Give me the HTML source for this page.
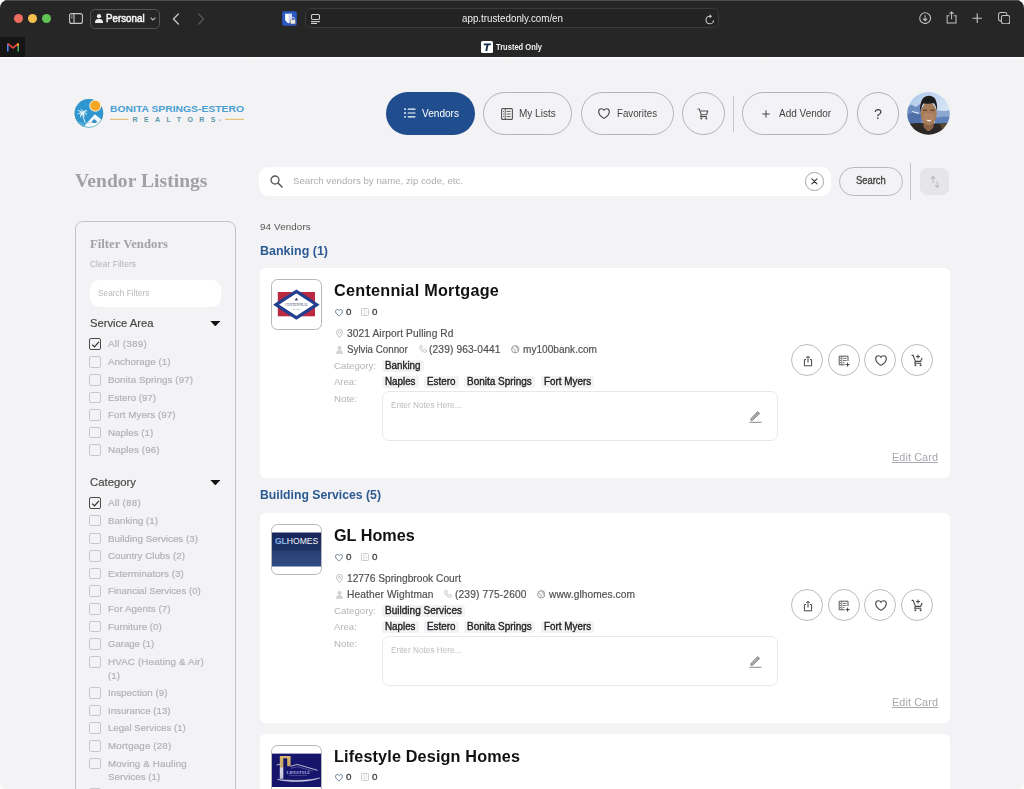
<!DOCTYPE html>
<html lang="en"><head><meta charset="utf-8"><title>Trusted Only</title><style>
*{box-sizing:border-box;margin:0;padding:0}
html,body{width:1024px;height:789px;overflow:hidden;background:#fff}
body{font-family:"Liberation Sans",sans-serif;position:relative;color:#222}
.abs,.t,svg.i{position:absolute}
.t{white-space:nowrap;transform:scaleX(.9999);transform-origin:0 50%}
#win{position:absolute;left:0;top:0;width:1024px;height:789px;background:#f3f3f6;border-radius:8px 8px 6px 6px;overflow:hidden}
#chrome{position:absolute;left:0;top:0;width:1024px;height:57px;background:#262626}
.pill{position:absolute;border:1px solid #b4b4b8;border-radius:22px;background:transparent}
.card{position:absolute;left:260px;width:689.6px;height:209.6px;background:#fff;border-radius:5.5px}
.lb{position:absolute;left:11px;top:11px;width:51px;height:51px;border:1.2px solid #b6b6ba;border-radius:6.5px;background:#fff;overflow:hidden}
.chip{position:absolute;height:12px;background:#f2f2f5;border-radius:3px}
.note{position:absolute;left:121.5px;top:123.2px;width:396px;height:49.5px;border:1px solid #e8e8eb;border-radius:7px;background:#fff}
.circ{position:absolute;width:32px;height:32px;border:1.2px solid #bcbcc0;border-radius:50%}
.cb{position:absolute;left:89px;width:11.6px;height:11.6px;border:1.2px solid #c8c8cc;border-radius:2px}
.cb.on{border-color:#4a4a4a;border-width:1.4px}
</style></head><body><div id="win"><div id="chrome"><div class="abs" style="left:0;top:0;width:1024px;height:1px;background:#4e4e4e"></div><div class="abs" style="left:13.600000000000001px;top:13.7px;width:9.4px;height:9.4px;border-radius:50%;background:#ec6a5e"></div><div class="abs" style="left:27.599999999999998px;top:13.7px;width:9.4px;height:9.4px;border-radius:50%;background:#f4bf4f"></div><div class="abs" style="left:41.699999999999996px;top:13.7px;width:9.4px;height:9.4px;border-radius:50%;background:#61c554"></div><svg class="i" style="left:69px;top:13px" width="14" height="11" viewBox="0 0 14 11"><rect x=".6" y=".6" width="12.8" height="9.8" rx="2" fill="none" stroke="#c8c8c8" stroke-width="1.1"></rect><line x1="5" y1=".6" x2="5" y2="10.4" stroke="#c8c8c8" stroke-width="1.1"></line><line x1="2" y1="3" x2="3.6" y2="3" stroke="#c8c8c8" stroke-width=".8"></line><line x1="2" y1="4.8" x2="3.6" y2="4.8" stroke="#c8c8c8" stroke-width=".8"></line></svg><div class="abs" style="left:89.5px;top:8.5px;width:70px;height:20px;border:1px solid #555;border-radius:5px"></div><svg class="i" style="left:95px;top:13.5px" width="8" height="9" viewBox="0 0 8 9"><circle cx="4" cy="2.2" r="2.1" fill="#eee"></circle><path d="M0 9 C0 5.6 1.6 5 4 5 S8 5.6 8 9Z" fill="#eee"></path></svg><div class="t" style="left: 106.3px; top: 11.9px; font-size: 10.3px; line-height: 14px; color: rgb(242, 242, 242); -webkit-text-stroke: 0.55px; transform-origin: 0px 50%; transform: scaleX(0.9499);">Personal</div><svg class="i" style="left:150px;top:16.5px" width="6" height="4" viewBox="0 0 6 4"><path d="M.6 .6 L3 3 L5.4 .6" fill="none" stroke="#bbb" stroke-width="1.1"></path></svg><svg class="i" style="left:172px;top:12.5px" width="8" height="12" viewBox="0 0 8 12"><path d="M6.4 1 L1.4 6 L6.4 11" fill="none" stroke="#c4c4c4" stroke-width="1.4" stroke-linecap="round" stroke-linejoin="round"></path></svg><svg class="i" style="left:197px;top:12.5px" width="8" height="12" viewBox="0 0 8 12"><path d="M1.6 1 L6.6 6 L1.6 11" fill="none" stroke="#555" stroke-width="1.4" stroke-linecap="round" stroke-linejoin="round"></path></svg><svg class="i" style="left:281.500px;top:10.500px" width="15" height="15" viewBox="-.2 -.2 15.400 15.400"><rect width="15" height="15" rx="2" fill="#2c57c4"></rect><path d="M3 2.5 H10 V8 C10 10.5 6.5 12.5 6.5 12.5 S3 10.5 3 8Z" fill="#fff"></path><path d="M6.5 2.5 H10 V8 C10 10.5 6.5 12.5 6.5 12.5Z" fill="#cfd9f2"></path><rect x="8.3" y="8.6" width="5.4" height="4.6" rx="1" fill="#e8e8e8" stroke="#444" stroke-width=".5"></rect><path d="M9.6 8.6 V7.6 A1.4 1.4 0 0 1 12.4 7.6 V8.6" fill="none" stroke="#e8e8e8" stroke-width=".9"></path></svg><div class="abs" style="left:304.6px;top:8.4px;width:414px;height:20px;border:1.2px solid #3a3a3a;border-radius:6px;background:#232323"></div><svg class="i" style="left:310.500px;top:13.500px" width="9" height="10" viewBox="0 0 9 10"><rect x=".55" y=".55" width="7.900" height="5" rx="1.100" fill="none" stroke="#d0d0d0" stroke-width="1.100"></rect><line x1="0" y1="7.600" x2="9" y2="7.600" stroke="#d0d0d0" stroke-width="1.100"></line><line x1="0" y1="9.450" x2="6" y2="9.450" stroke="#d0d0d0" stroke-width="1.100"></line></svg><div class="t" style="left: 462px; top: 11.5px; font-size: 10.3px; line-height: 14px; color: rgb(240, 240, 240); transform-origin: 0px 50%; transform: scaleX(0.9504);">app.trustedonly.com/en</div><svg class="i" style="left:705px;top:13.5px" width="10" height="11" viewBox="0 0 10 11"><path d="M8.6 6.2 A3.8 3.8 0 1 1 5 2.2" fill="none" stroke="#c8c8c8" stroke-width="1.1"></path><path d="M4.6 .2 L7.2 2.2 L4.6 4.2Z" fill="#c8c8c8"></path></svg><svg class="i" style="left:919.2px;top:11.8px" width="12.300" height="12.300" viewBox="0 0 13 13"><circle cx="6.5" cy="6.5" r="5.7" fill="none" stroke="#c4c4c4" stroke-width="1.1"></circle><path d="M6.5 3.4 V9 M4.3 7 L6.5 9.2 L8.7 7" fill="none" stroke="#c4c4c4" stroke-width="1.1"></path></svg><svg class="i" style="left:945.8px;top:11px" width="11.200" height="13" viewBox="0 0 12 14"><path d="M3.6 5 H1.2 V13 H10.8 V5 H8.4" fill="none" stroke="#c4c4c4" stroke-width="1.1"></path><path d="M6 9 V1.2 M3.8 3.2 L6 1 L8.2 3.2" fill="none" stroke="#c4c4c4" stroke-width="1.1"></path></svg><svg class="i" style="left:971.8px;top:12.700px" width="10.500" height="10.500" viewBox="0 0 11 11"><path d="M5.5 .5 V10.5 M.5 5.5 H10.5" stroke="#c4c4c4" stroke-width="1.2"></path></svg><svg class="i" style="left:997.7px;top:11.8px" width="12.300" height="12.300" viewBox="0 0 13 13"><rect x="3.6" y="3.6" width="8.8" height="8.8" rx="2" fill="#262626" stroke="#c4c4c4" stroke-width="1.1"></rect><path d="M3.4 9.4 H2.6 A2 2 0 0 1 .6 7.4 V2.6 A2 2 0 0 1 2.6 .6 H7.4 A2 2 0 0 1 9.4 2.6 V3.4" fill="none" stroke="#c4c4c4" stroke-width="1.1"></path></svg><div class="abs" style="left:0;top:36.5px;width:24.5px;height:20.5px;background:#151515"></div><svg class="i" style="left:6.8px;top:43px" width="12" height="8.5" viewBox="0 0 12 8.5"><path d="M0 8.5 V1 L1.6 0 V8.5Z" fill="#4a86e8"></path><path d="M12 8.5 V1 L10.4 0 V8.5Z" fill="#3aa757"></path><path d="M0 1 L1.2 0 L6 3.8 L10.8 0 L12 1 L6 6Z" fill="#e8453c"></path><path d="M10.4 0 L12 1 V2.4 L10.4 3.4Z" fill="#f5b916"></path></svg><svg class="i" style="left:481px;top:41px" width="12" height="12" viewBox="0 0 12 12"><rect width="12" height="12" rx="1.5" fill="#fff"></rect><path d="M3 2.6 H10 L9.6 4.3 H7.4 L6.2 10 H4.3 L5.5 4.3 H2.6Z" fill="#14284e"></path></svg><div class="t" style="left: 496px; top: 41px; font-size: 8.3px; line-height: 12px; color: rgb(240, 240, 240); font-weight: 700; transform-origin: 0px 50%; transform: scaleX(0.9071);">Trusted Only</div></div><div class="abs" style="left:0;top:57px;width:1024px;height:3px;background:linear-gradient(#fdfdfe,#f3f3f6)"></div><svg class="i" style="left:73px;top:97px" width="174" height="34" viewBox="0 0 174 34">
<defs><clipPath id="lc"><circle cx="15.900" cy="16.300" r="14.300"></circle></clipPath></defs>
<circle cx="15.900" cy="16.300" r="14.300" fill="#2f96cf"></circle>
<g clip-path="url(#lc)">
<path d="M21.800 17.300 L31 24.500 V32 H9 L12.500 27.500Z" fill="#f2f9fc"></path>
<path d="M0 24 C4 23 8 25 12 28 L10 32 H0Z" fill="#5db3dc"></path>
<path d="M18.300 24.600 L21.300 22 L24.300 24.600 H23.500 V26 H19.100 V24.600Z" fill="#3f8fc6"></path>
<path d="M15 24.500 l1 1 -1 1 M16.500 25 l1.200 1.5" stroke="#8f9cc8" stroke-width=".6" fill="none"></path>
<path d="M9.300 15.500 C9.800 19 10.800 22.500 12.300 26" stroke="#cfe6f4" stroke-width="1.100" fill="none"></path>
<path d="M9 15.600 C7.500 13.300 5.500 12.800 3.600 13.600 C5.500 13.800 6.800 14.500 7.800 15.600 C6 15.400 4.600 16.300 4 18 C5.300 17 6.600 16.600 8 16.600 C7 18 7 19.600 7.600 20.800 C8 19.300 8.600 18 9.500 17 C10.500 18 11 19.300 11 20.600 C12 19.200 11.800 17.600 10.800 16.400 C12.300 16.400 13.500 17 14.300 18 C14 16.300 12.600 15.200 10.800 15.200 C12 14.200 13.500 13.900 14.800 14.300 C13.300 12.800 11 13.200 9.800 14.800 C9.600 13.200 8.600 12 7.200 11.600 C8.200 12.600 8.800 14 9 15.600Z" fill="#e8f6fc"></path>
</g>
<circle cx="15.900" cy="16.300" r="14" fill="none" stroke="#3a8fa6" stroke-width=".7" opacity=".7"></circle>
<circle cx="22.300" cy="8.700" r="5.5" fill="#f5a623" stroke="#f7ead0" stroke-width="1.100"></circle>
<rect x="37" y="21.800" width="18.5" height="1.100" fill="#e3bd6b"></rect>
<rect x="152" y="21.800" width="19" height="1.100" fill="#e3bd6b"></rect>
<text x="37" y="15" font-family="Liberation Sans, sans-serif" font-weight="700" font-size="9.300" fill="#4a9fd2" textLength="134" lengthAdjust="spacingAndGlyphs">BONITA SPRINGS-ESTERO</text>
<text x="59.5" y="25.300" font-family="Liberation Sans, sans-serif" font-weight="700" font-size="7" fill="#5b97a8" textLength="83" lengthAdjust="spacing">REALTORS</text>
<text x="145.5" y="24.5" font-family="Liberation Sans, sans-serif" font-size="3.5" fill="#5b97a8">®</text>
</svg><div class="abs" style="left:385.5px;top:92px;width:89.7px;height:42.5px;border-radius:22px;background:#1f4d8e"></div><svg class="i" style="left:403.5px;top:108px" width="12" height="10" viewBox="0 0 12 10"><g fill="#fff"><circle cx="1" cy="1.2" r=".9"></circle><circle cx="1" cy="5" r=".9"></circle><circle cx="1" cy="8.800" r=".9"></circle><rect x="3.600" y=".6" width="8" height="1.200" rx=".6"></rect><rect x="3.600" y="4.400" width="8" height="1.200" rx=".6"></rect><rect x="3.600" y="8.200" width="8" height="1.200" rx=".6"></rect></g></svg><div class="t" style="left: 421.5px; top: 105.8px; font-size: 10.8px; line-height: 15px; color: rgb(255, 255, 255); transform-origin: 0px 50%; transform: scaleX(0.9338);">Vendors</div><div class="pill" style="left:483px;top:92px;width:89.3px;height:42.5px"></div><svg class="i" style="left:501px;top:107.500px" width="12" height="12" viewBox="0 0 12 12"><rect x=".6" y=".6" width="10.800" height="10.800" rx="1" fill="none" stroke="#555" stroke-width="1.100"></rect><line x1="4.200" y1=".6" x2="4.200" y2="11.400" stroke="#555" stroke-width=".9"></line><g stroke="#555" stroke-width=".9"><line x1="2" y1="3.500" x2="3" y2="3.500"></line><line x1="2" y1="6" x2="3" y2="6"></line><line x1="2" y1="8.500" x2="3" y2="8.500"></line><line x1="5.600" y1="3.500" x2="9.600" y2="3.500"></line><line x1="5.600" y1="6" x2="9.600" y2="6"></line><line x1="5.600" y1="8.500" x2="9.600" y2="8.500"></line></g></svg><div class="t" style="left: 519.3px; top: 105.8px; font-size: 10.8px; line-height: 15px; color: rgb(68, 68, 68); transform-origin: 0px 50%; transform: scaleX(0.927);">My Lists</div><div class="pill" style="left:580.5px;top:92px;width:93px;height:42.5px"></div><svg class="i" style="left:598px;top:108px" width="12" height="11" viewBox="0 0 12 11"><path d="M6 10.400 C6 10.400 .7 7.200 .7 3.700 C.7 2 2 .8 3.500 .8 C4.600 .8 5.500 1.400 6 2.300 C6.500 1.400 7.400 .8 8.500 .8 C10 .8 11.300 2 11.300 3.700 C11.300 7.200 6 10.400 6 10.400Z" fill="none" stroke="#444" stroke-width="1.100" stroke-linejoin="round"></path></svg><div class="t" style="left: 617px; top: 105.8px; font-size: 10.8px; line-height: 15px; color: rgb(68, 68, 68); transform-origin: 0px 50%; transform: scaleX(0.9009);">Favorites</div><div class="pill" style="left:682px;top:92px;width:42.5px;height:42.5px"></div><svg class="i" style="left:697px;top:107.500px" width="12" height="12" viewBox="0 0 12 12"><path d="M.5 1 H2.300 L4.300 6.800 H9.500 L10.800 3 H3.800" fill="none" stroke="#555" stroke-width="1.100" stroke-linejoin="round"></path><path d="M4.300 6.800 L3.600 8.600 H10" fill="none" stroke="#555" stroke-width="1.100"></path><circle cx="4.300" cy="10.600" r="1" fill="#555"></circle><circle cx="9.300" cy="10.600" r="1" fill="#555"></circle></svg><div class="abs" style="left:733px;top:95.500px;width:1px;height:36px;background:#c4c4c8"></div><div class="pill" style="left:742px;top:92px;width:106px;height:42.5px"></div><svg class="i" style="left:761.500px;top:109.500px" width="8" height="8" viewBox="0 0 8 8"><path d="M4 .3 V7.700 M.3 4 H7.700" stroke="#444" stroke-width="1"></path></svg><div class="t" style="left: 778.8px; top: 105.8px; font-size: 10.8px; line-height: 15px; color: rgb(68, 68, 68); transform-origin: 0px 50%; transform: scaleX(0.925);">Add Vendor</div><div class="pill" style="left:856.5px;top:92px;width:42.5px;height:42.5px"></div><div class="t" style="left:873.7px;top:104.0px;font-size:14.5px;line-height:20px;color:#444;">?</div><svg class="i" style="left:906px;top:91px" width="45" height="45" viewBox="-1 -1 45 45"><defs><clipPath id="av"><circle cx="21.5" cy="21.400" r="21.300"></circle></clipPath><linearGradient id="sky" x1="0" y1="0" x2="1" y2="1"><stop offset="0" stop-color="#a4c2e8"></stop><stop offset=".6" stop-color="#d4e3f4"></stop><stop offset="1" stop-color="#e4edf7"></stop></linearGradient><filter id="bl" x="-10%" y="-10%" width="120%" height="120%"><feGaussianBlur stdDeviation=".7"></feGaussianBlur></filter></defs><g clip-path="url(#av)"><g filter="url(#bl)">
<rect x="-3" y="-3" width="49" height="49" fill="url(#sky)"></rect>
<path d="M-2 18 L4 12.500 L9 15 L13 12 L16 16 V36 H-2Z" fill="#6c8cc0"></path>
<path d="M-2 24 L6 20 L14 22 V36 H-2Z" fill="#4f70a8"></path>
<path d="M5 19.500 L12 21.300" stroke="#e4ecf6" stroke-width="1.200"></path>
<path d="M28 21 L31 18.500 L38 19 L45 17.500 V36 H28Z" fill="#8ea8d2"></path>
<path d="M28 26 L36 24.500 L45 25 V36 H28Z" fill="#5f80b8"></path>
<path d="M-2 32 L10 31 L33 31.500 L45 31 V46 H-2Z" fill="#2e2a26"></path>
<path d="M33 32 L45 31 V36 L35 37Z" fill="#5d4b30"></path>
<path d="M16.500 30 H26.500 V39 H16.500Z" fill="#8a6448"></path>
<path d="M4 46 C5 38 10 35.500 16 35 L21.500 40 L27 35 C33 35.500 38 38 39 46Z" fill="#2b2725"></path>
<ellipse cx="21.700" cy="22" rx="8" ry="11.300" fill="#a57b5a"></ellipse>
<path d="M17 20 C19 22 24 22 26.500 20 L27.500 27 C25 31 18.500 31 16 27Z" fill="#b08462"></path>
<path d="M13.200 20.500 C12.200 8.500 16.500 3.800 22 3.800 C27.600 3.800 31 8.500 30 20.500 C29.600 16 28.500 13 27 11.300 C23 12 18 11.800 16.500 11.500 C14.600 13.500 13.700 17 13.200 20.500Z" fill="#1e1a1b"></path>
<path d="M16 18.200 H20 M23.500 18.200 H27.5" stroke="#4a3526" stroke-width="1"></path>
<path d="M19.300 27.500 C20.500 30 23.500 30 24.600 27.500 C23 28.300 21 28.300 19.300 27.500Z" fill="#f6f0ea"></path>
</g></g></svg><div class="t" style="left: 75.3px; top: 166.7px; font-size: 19.5px; line-height: 27px; color: rgb(160, 160, 166); font-weight: 700; font-family: &quot;Liberation Serif&quot;, serif; letter-spacing: 0.057px;">Vendor Listings</div><div class="abs" style="left:259px;top:167px;width:572px;height:29px;border-radius:9px;background:#fff"></div><svg class="i" style="left:270px;top:175.300px" width="13" height="13" viewBox="0 0 14 14"><circle cx="5.400" cy="5.400" r="4.300" fill="none" stroke="#555" stroke-width="1.400"></circle><path d="M8.600 8.600 L13 13" stroke="#555" stroke-width="1.600" stroke-linecap="round"></path></svg><div class="t" style="left: 292.5px; top: 174.3px; font-size: 9.8px; line-height: 14px; color: rgb(173, 173, 178); transform-origin: 0px 50%; transform: scaleX(0.9879);">Search vendors by name, zip code, etc.</div><div class="abs" style="left:805px;top:172px;width:18.500px;height:18.500px;border:1px solid #a8a8ac;border-radius:50%"></div><svg class="i" style="left:810.900px;top:177.900px" width="6.800" height="6.800" viewBox="0 0 8 8"><path d="M1 1 L7 7 M7 1 L1 7" stroke="#333" stroke-width="1.300" stroke-linecap="round"></path></svg><div class="pill" style="left:839px;top:167px;width:63.500px;height:29px;border-color:#b8b8bc"></div><div class="t" style="left: 855.8px; top: 174px; font-size: 10.3px; line-height: 14px; color: rgb(68, 68, 68); -webkit-text-stroke: 0.35px; transform-origin: 0px 50%; transform: scaleX(0.9131);">Search</div><div class="abs" style="left:910.300px;top:163px;width:1px;height:37px;background:#c4c4c8"></div><div class="abs" style="left:920px;top:167.500px;width:29px;height:27.800px;border-radius:7px;background:#e6e6ea"></div><svg class="i" style="left:928.500px;top:174.500px" width="12" height="14" viewBox="0 0 12 14"><path d="M4 8 V1.500 M1.900 3.600 L4 1.300 L6.100 3.600" fill="none" stroke="#bcbcc0" stroke-width="1.100"></path><path d="M8.200 6 V12.300 M6.100 10.200 L8.200 12.500 L10.300 10.200" fill="none" stroke="#bcbcc0" stroke-width="1.100"></path></svg><div class="abs" style="left:74.500px;top:221px;width:161px;height:600px;border:1px solid #c2c2c6;border-radius:8px"></div><div class="t" style="left: 89.5px; top: 234.8px; font-size: 13.2px; line-height: 18px; color: rgb(162, 162, 168); font-weight: 700; font-family: &quot;Liberation Serif&quot;, serif; transform-origin: 0px 50%; transform: scaleX(0.9664);">Filter Vendors</div><div class="t" style="left: 89.5px; top: 258.3px; font-size: 8.3px; line-height: 12px; color: rgb(176, 176, 182); letter-spacing: 0.103px;">Clear Filters</div><div class="abs" style="left:89.500px;top:279.500px;width:131px;height:27.500px;border-radius:9px;background:#fff"></div><div class="t" style="left: 97.5px; top: 286.7px; font-size: 8.3px; line-height: 12px; color: rgb(184, 184, 190); letter-spacing: 0.024px;">Search Filters</div><div class="t" style="left: 89.5px; top: 315.3px; font-size: 11.3px; line-height: 16px; color: rgb(70, 70, 70); -webkit-text-stroke: 0.18px; transform-origin: 0px 50%; transform: scaleX(0.9916);">Service Area</div><svg class="i" style="left:209.600px;top:320.5px" width="10.700" height="5.400" viewBox="0 0 11 6"><path d="M0 0 H11 L5.500 6Z" fill="#111"></path></svg><div class="cb on" style="top:338.4px"></div><svg class="i" style="left:91px;top:339.9px" width="9" height="9" viewBox="0 0 9 9"><path d="M1.200 4.600 L3.500 6.900 L7.900 1.800" fill="none" stroke="#333" stroke-width="1.300"></path></svg><div class="t" style="left: 108px; top: 337.4px; font-size: 9.8px; line-height: 14px; color: rgb(176, 176, 182); -webkit-text-stroke: 0.18px; letter-spacing: 0.273px;">All (389)</div><div class="cb" style="top:356px"></div><div class="t" style="left: 108px; top: 355px; font-size: 9.8px; line-height: 14px; color: rgb(176, 176, 182); -webkit-text-stroke: 0.18px; letter-spacing: 0.033px;">Anchorage (1)</div><div class="cb" style="top:374px"></div><div class="t" style="left: 108px; top: 373px; font-size: 9.8px; line-height: 14px; color: rgb(176, 176, 182); -webkit-text-stroke: 0.18px; letter-spacing: 0.061px;">Bonita Springs (97)</div><div class="cb" style="top:391.5px"></div><div class="t" style="left: 108px; top: 390.5px; font-size: 9.8px; line-height: 14px; color: rgb(176, 176, 182); -webkit-text-stroke: 0.18px; transform-origin: 0px 50%; transform: scaleX(0.9904);">Estero (97)</div><div class="cb" style="top:409px"></div><div class="t" style="left: 108px; top: 408px; font-size: 9.8px; line-height: 14px; color: rgb(176, 176, 182); -webkit-text-stroke: 0.18px; letter-spacing: 0.038px;">Fort Myers (97)</div><div class="cb" style="top:426.6px"></div><div class="t" style="left: 108px; top: 425.6px; font-size: 9.8px; line-height: 14px; color: rgb(176, 176, 182); -webkit-text-stroke: 0.18px; letter-spacing: 0.011px;">Naples (1)</div><div class="cb" style="top:444.3px"></div><div class="t" style="left: 108px; top: 443.3px; font-size: 9.8px; line-height: 14px; color: rgb(176, 176, 182); -webkit-text-stroke: 0.18px; letter-spacing: 0.082px;">Naples (96)</div><div class="t" style="left: 89.5px; top: 474.3px; font-size: 11.3px; line-height: 16px; color: rgb(70, 70, 70); -webkit-text-stroke: 0.18px; letter-spacing: 0.021px;">Category</div><svg class="i" style="left:209.600px;top:479.5px" width="10.700" height="5.400" viewBox="0 0 11 6"><path d="M0 0 H11 L5.500 6Z" fill="#111"></path></svg><div class="cb on" style="top:497.2px"></div><svg class="i" style="left:91px;top:498.7px" width="9" height="9" viewBox="0 0 9 9"><path d="M1.200 4.600 L3.500 6.900 L7.900 1.800" fill="none" stroke="#333" stroke-width="1.300"></path></svg><div class="t" style="left: 108px; top: 496.2px; font-size: 9.8px; line-height: 14px; color: rgb(176, 176, 182); -webkit-text-stroke: 0.18px; letter-spacing: 0.234px;">All (88)</div><div class="cb" style="top:514.8px"></div><div class="t" style="left: 108px; top: 513.8px; font-size: 9.8px; line-height: 14px; color: rgb(176, 176, 182); -webkit-text-stroke: 0.18px; transform-origin: 0px 50%; transform: scaleX(0.9979);">Banking (1)</div><div class="cb" style="top:532.6px"></div><div class="t" style="left: 108px; top: 531.6px; font-size: 9.8px; line-height: 14px; color: rgb(176, 176, 182); -webkit-text-stroke: 0.18px; letter-spacing: 0.008px;">Building Services (3)</div><div class="cb" style="top:550.2px"></div><div class="t" style="left: 108px; top: 549.2px; font-size: 9.8px; line-height: 14px; color: rgb(176, 176, 182); -webkit-text-stroke: 0.18px; letter-spacing: 0.014px;">Country Clubs (2)</div><div class="cb" style="top:567.8px"></div><div class="t" style="left: 108px; top: 566.8px; font-size: 9.8px; line-height: 14px; color: rgb(176, 176, 182); -webkit-text-stroke: 0.18px; letter-spacing: 0.04px;">Exterminators (3)</div><div class="cb" style="top:585.4px"></div><div class="t" style="left: 108px; top: 584.4px; font-size: 9.8px; line-height: 14px; color: rgb(176, 176, 182); -webkit-text-stroke: 0.18px; transform-origin: 0px 50%; transform: scaleX(0.9852);">Financial Services (0)</div><div class="cb" style="top:603.1px"></div><div class="t" style="left: 108px; top: 602.1px; font-size: 9.8px; line-height: 14px; color: rgb(176, 176, 182); -webkit-text-stroke: 0.18px; letter-spacing: 0.032px;">For Agents (7)</div><div class="cb" style="top:620.8px"></div><div class="t" style="left: 108px; top: 619.8px; font-size: 9.8px; line-height: 14px; color: rgb(176, 176, 182); -webkit-text-stroke: 0.18px; transform-origin: 0px 50%; transform: scaleX(0.9981);">Furniture (0)</div><div class="cb" style="top:638.4px"></div><div class="t" style="left: 108px; top: 637.4px; font-size: 9.8px; line-height: 14px; color: rgb(176, 176, 182); -webkit-text-stroke: 0.18px; transform-origin: 0px 50%; transform: scaleX(0.9774);">Garage (1)</div><div class="cb" style="top:656px"></div><div class="t" style="left: 108px; top: 655px; font-size: 9.8px; line-height: 14px; color: rgb(176, 176, 182); -webkit-text-stroke: 0.18px; letter-spacing: 0.148px;">HVAC (Heating &amp; Air)</div><div class="t" style="left:108px;top:668.5px;font-size:9.8px;line-height:14px;color:#b0b0b6;-webkit-text-stroke:0.18px;">(1)</div><div class="cb" style="top:687px"></div><div class="t" style="left: 108px; top: 686px; font-size: 9.8px; line-height: 14px; color: rgb(176, 176, 182); -webkit-text-stroke: 0.18px; letter-spacing: 0.011px;">Inspection (9)</div><div class="cb" style="top:704.7px"></div><div class="t" style="left: 108px; top: 703.7px; font-size: 9.8px; line-height: 14px; color: rgb(176, 176, 182); -webkit-text-stroke: 0.18px; transform-origin: 0px 50%; transform: scaleX(0.9895);">Insurance (13)</div><div class="cb" style="top:722.3px"></div><div class="t" style="left: 108px; top: 721.3px; font-size: 9.8px; line-height: 14px; color: rgb(176, 176, 182); -webkit-text-stroke: 0.18px; transform-origin: 0px 50%; transform: scaleX(0.9853);">Legal Services (1)</div><div class="cb" style="top:740px"></div><div class="t" style="left: 108px; top: 739px; font-size: 9.8px; line-height: 14px; color: rgb(176, 176, 182); -webkit-text-stroke: 0.18px; letter-spacing: 0.141px;">Mortgage (28)</div><div class="cb" style="top:757.7px"></div><div class="t" style="left: 108px; top: 756.7px; font-size: 9.8px; line-height: 14px; color: rgb(176, 176, 182); -webkit-text-stroke: 0.18px; letter-spacing: 0.13px;">Moving &amp; Hauling</div><div class="t" style="left:108px;top:770.2px;font-size:9.8px;line-height:14px;color:#b0b0b6;-webkit-text-stroke:0.18px;">Services (1)</div><div class="cb" style="top:787.6px"></div><div class="t" style="left: 108px; top: 786.6px; font-size: 9.8px; line-height: 14px; color: rgb(176, 176, 182); -webkit-text-stroke: 0.18px; letter-spacing: 0.119px;">Painters (1)</div><div class="t" style="left: 260px; top: 220.3px; font-size: 9.8px; line-height: 14px; color: rgb(85, 85, 85); letter-spacing: 0.129px;">94 Vendors</div><div class="t" style="left: 260px; top: 241.7px; font-size: 12.5px; line-height: 18px; color: rgb(44, 90, 147); font-weight: 700; transform-origin: 0px 50%; transform: scaleX(0.9992);">Banking (1)</div><div class="t" style="left: 260px; top: 486.4px; font-size: 12.5px; line-height: 18px; color: rgb(44, 90, 147); font-weight: 700; transform-origin: 0px 50%; transform: scaleX(0.9786);">Building Services (5)</div><div class="card" style="top:268px"><div class="lb"><svg class="i" style="left:0;top:0" width="50" height="50" viewBox="0 0 50 50"><rect x="5.800" y="12" width="37.200" height="24.300" fill="#bb2a40"></rect><path d="M4.100 24.700 L24.400 11.500 L44.700 24.700 L24.400 37.900Z" fill="#fff" stroke="#223f8f" stroke-width="3.200"></path><text x="24.400" y="25.600" text-anchor="middle" font-family="Liberation Serif, serif" font-size="3.700" fill="#3a4060" textLength="23" lengthAdjust="spacingAndGlyphs">CENTENNIAL</text><text x="24.400" y="29.600" text-anchor="middle" font-family="Liberation Serif, serif" font-size="2.5" fill="#3a4060">BANK</text><path d="M24.400 17.600 l.5 1.200 1.300 .1 -1 .8 .4 1.300 -1.200 -.7 -1.200 .7 .4 -1.300 -1 -.8 1.300 -.1Z" fill="#333a5a"></path></svg></div><div class="t" style="left: 74px; top: 11.3px; font-size: 16.2px; line-height: 23px; color: rgb(17, 17, 17); font-weight: 700; letter-spacing: 0.266px;">Centennial Mortgage</div><svg class="i" style="left:75.19999999999999px;top:40.5px" width="8" height="7.300" viewBox="0 0 12 11"><path d="M6 10.400 C6 10.400 .7 7.200 .7 3.700 C.7 2 2 .8 3.500 .8 C4.600 .8 5.500 1.400 6 2.300 C6.500 1.400 7.400 .8 8.500 .8 C10 .8 11.300 2 11.300 3.700 C11.300 7.200 6 10.400 6 10.400Z" fill="none" stroke="#5a7396" stroke-width="1.400"></path></svg><div class="t" style="left:86.30000000000001px;top:36.69999999999999px;font-size:9.8px;line-height:14px;color:#444;-webkit-text-stroke:0.35px;">0</div><svg class="i" style="left:101px;top:39.69999999999999px" width="8" height="8" viewBox="0 0 8 8"><rect x=".5" y=".5" width="7" height="7" rx=".8" fill="none" stroke="#c6c6ca" stroke-width=".9"></rect><line x1="3" y1=".5" x2="3" y2="7.5" stroke="#d0d0d4" stroke-width=".7"></line><line x1="4.200" y1="3" x2="6.300" y2="3" stroke="#d0d0d4" stroke-width=".7"></line><line x1="4.200" y1="5" x2="6.300" y2="5" stroke="#d0d0d4" stroke-width=".7"></line></svg><div class="t" style="left:112.10000000000002px;top:36.69999999999999px;font-size:9.8px;line-height:14px;color:#444;-webkit-text-stroke:0.35px;">0</div><svg class="i" style="left:75.5px;top:60.5px" width="7" height="9" viewBox="0 0 7 9"><path d="M3.500 8.500 C3.500 8.500 .5 5.500 .5 3.400 A3 3 0 0 1 6.500 3.400 C6.500 5.500 3.500 8.500 3.500 8.500Z" fill="none" stroke="#b0b0b4" stroke-width=".8"></path><circle cx="3.5" cy="3.400" r="1" fill="none" stroke="#b0b0b4" stroke-width=".7"></circle></svg><div class="t" style="left: 86.5px; top: 59.4px; font-size: 10.2px; line-height: 14px; color: rgb(80, 80, 80); -webkit-text-stroke: 0.18px; letter-spacing: 0.103px;">3021 Airport Pulling Rd</div><svg class="i" style="left:75.80000000000001px;top:77.5px" width="7" height="8" viewBox="0 0 7 8"><circle cx="3.5" cy="2" r="1.700" fill="#d2d2d6" stroke="#c4c4c8" stroke-width=".5"></circle><path d="M.4 7.600 C.4 5 2 4.500 3.500 4.500 S6.600 5 6.600 7.600Z" fill="#d2d2d6" stroke="#c4c4c8" stroke-width=".5"></path></svg><div class="t" style="left: 86.5px; top: 74.7px; font-size: 10.2px; line-height: 14px; color: rgb(80, 80, 80); -webkit-text-stroke: 0.18px; transform-origin: 0px 50%; transform: scaleX(0.9588);">Sylvia Connor</div><svg class="i" style="left:158.60000000000002px;top:77.30000000000001px" width="8" height="8" viewBox="0 0 8 8"><path d="M1.600 .6 L2.800 .6 L3.400 2.400 L2.600 3.200 C3.100 4.200 3.800 4.900 4.800 5.400 L5.600 4.600 L7.400 5.200 V6.400 C7.400 7 7 7.400 6.400 7.400 C3.200 7.200 .8 4.800 .6 1.600 C.6 1 1 .6 1.600 .6Z" fill="none" stroke="#b8b8bc" stroke-width=".8"></path></svg><div class="t" style="left: 169.1px; top: 74.7px; font-size: 10.2px; line-height: 14px; color: rgb(80, 80, 80); -webkit-text-stroke: 0.18px; letter-spacing: 0.136px;">(239) 963-0441</div><svg class="i" style="left:251.10000000000002px;top:77.30000000000001px" width="8.5" height="8.5" viewBox="0 0 9 9"><circle cx="4.5" cy="4.5" r="3.900" fill="none" stroke="#8a8a90" stroke-width=".9"></circle><path d="M1.200 3 C2.500 3.500 3 4.500 4 4.800 C4.800 5 4.500 6.500 3.800 8 M5 .8 C4.500 2 5.500 2.600 6.500 2.400 C7 3.500 6 4.500 7 5.500 L8 5.600" fill="none" stroke="#8a8a90" stroke-width=".8"></path></svg><div class="t" style="left: 263.1px; top: 74.7px; font-size: 10.2px; line-height: 14px; color: rgb(80, 80, 80); -webkit-text-stroke: 0.18px; transform-origin: 0px 50%; transform: scaleX(0.9901);">my100bank.com</div><div class="t" style="left: 74px; top: 90.7px; font-size: 9.8px; line-height: 14px; color: rgb(180, 180, 186); transform-origin: 0px 50%; transform: scaleX(0.9887);">Category:</div><div class="chip" style="left:122px;top:92px;width:41.5px"></div><div class="t" style="left: 124.8px; top: 91.1px; font-size: 10.2px; line-height: 14px; color: rgb(34, 34, 34); -webkit-text-stroke: 0.35px; transform-origin: 0px 50%; transform: scaleX(0.964);">Banking</div><div class="t" style="left: 74px; top: 107px; font-size: 9.8px; line-height: 14px; color: rgb(180, 180, 186); transform-origin: 0px 50%; transform: scaleX(0.9735);">Area:</div><div class="chip" style="left:122.0px;top:108.30000000000001px;width:36.5px"></div><div class="t" style="left: 124.8px; top: 107.4px; font-size: 10.2px; line-height: 14px; color: rgb(34, 34, 34); -webkit-text-stroke: 0.35px; transform-origin: 0px 50%; transform: scaleX(0.9617);">Naples</div><div class="chip" style="left:164.0px;top:108.30000000000001px;width:34.5px"></div><div class="t" style="left: 166.8px; top: 107.4px; font-size: 10.2px; line-height: 14px; color: rgb(34, 34, 34); -webkit-text-stroke: 0.35px; transform-origin: 0px 50%; transform: scaleX(0.9677);">Estero</div><div class="chip" style="left:204.0px;top:108.30000000000001px;width:70.8px"></div><div class="t" style="left: 206.8px; top: 107.4px; font-size: 10.2px; line-height: 14px; color: rgb(34, 34, 34); -webkit-text-stroke: 0.35px; transform-origin: 0px 50%; transform: scaleX(0.978);">Bonita Springs</div><div class="chip" style="left:280.80000000000007px;top:108.30000000000001px;width:53.2px"></div><div class="t" style="left: 283.6px; top: 107.4px; font-size: 10.2px; line-height: 14px; color: rgb(34, 34, 34); -webkit-text-stroke: 0.35px; transform-origin: 0px 50%; transform: scaleX(0.9695);">Fort Myers</div><div class="t" style="left: 74px; top: 123.5px; font-size: 9.8px; line-height: 14px; color: rgb(180, 180, 186); transform-origin: 0px 50%; transform: scaleX(0.9906);">Note:</div><div class="note"></div><div class="t" style="left: 131px; top: 130.5px; font-size: 8.3px; line-height: 12px; color: rgb(188, 188, 194); transform-origin: 0px 50%; transform: scaleX(0.9928);">Enter Notes Here...</div><svg class="i" style="left:488.5px;top:141.5px" width="13" height="13" viewBox="0 0 13 13"><path d="M2.200 8.200 L8.800 1.600 L10.600 3.400 L4 10 L1.800 10.400Z" fill="#aaa" stroke="#888" stroke-width=".9" stroke-linejoin="round"></path><path d="M8 2.400 L9.800 4.200" stroke="#888" stroke-width=".9"></path><line x1=".5" y1="12.300" x2="12.5" y2="12.300" stroke="#888" stroke-width="1"></line></svg><div class="circ" style="left:531px;top:76.19999999999999px"></div><div class="circ" style="left:567.6px;top:76.19999999999999px"></div><div class="circ" style="left:604.2px;top:76.19999999999999px"></div><div class="circ" style="left:641px;top:76.19999999999999px"></div><svg class="i" style="left:541.7px;top:86.69999999999999px" width="12" height="12" viewBox="0 0 12 12"><path d="M4 4.600 H2.400 V10.800 H9.600 V4.600 H8" fill="none" stroke="#444" stroke-width="1"></path><path d="M6 7.600 V1.400 M4.200 3 L6 1.200 L7.800 3" fill="none" stroke="#444" stroke-width="1"></path></svg><svg class="i" style="left:577.8000000000001px;top:86.69999999999999px" width="12" height="12" viewBox="0 0 12 12"><path d="M10 6 V1.200 H1.200 V9.800 H6.600" fill="none" stroke="#555" stroke-width="1"></path><line x1="3.800" y1="1.200" x2="3.800" y2="9.800" stroke="#555" stroke-width=".8"></line><g stroke="#555" stroke-width=".8"><line x1="2" y1="3.400" x2="3" y2="3.400"></line><line x1="2" y1="5.5" x2="3" y2="5.5"></line><line x1="2" y1="7.600" x2="3" y2="7.600"></line><line x1="5" y1="3.400" x2="8.600" y2="3.400"></line><line x1="5" y1="5.5" x2="8.600" y2="5.5"></line><line x1="5" y1="7.600" x2="6.600" y2="7.600"></line></g><path d="M9.600 7.600 V11.600 M7.600 9.600 H11.600" stroke="#444" stroke-width="1"></path></svg><svg class="i" style="left:614.9000000000001px;top:86.69999999999999px" width="12" height="11" viewBox="0 0 12 11"><path d="M6 10.400 C6 10.400 .7 7.200 .7 3.700 C.7 2 2 .8 3.500 .8 C4.600 .8 5.500 1.400 6 2.300 C6.500 1.400 7.400 .8 8.500 .8 C10 .8 11.300 2 11.300 3.700 C11.300 7.200 6 10.400 6 10.400Z" fill="none" stroke="#444" stroke-width="1.100"></path></svg><svg class="i" style="left:650.7px;top:86.19999999999999px" width="13" height="13" viewBox="0 0 13 13"><path d="M.6 1.400 H2.200 L4.400 7.400 H9.600 L11.200 4" fill="none" stroke="#444" stroke-width="1.100" stroke-linejoin="round"></path><path d="M4.400 7.400 L3.700 9.200 H10.400" fill="none" stroke="#444" stroke-width="1.100"></path><circle cx="4.400" cy="11.200" r="1" fill="#444"></circle><circle cx="9.600" cy="11.200" r="1" fill="#444"></circle><path d="M7 .6 V4.600 M5 2.600 H9" stroke="#444" stroke-width="1"></path></svg><div class="t" style="left: 632px; top: 182.1px; font-size: 10.8px; line-height: 15px; color: rgb(168, 168, 174); text-decoration: underline; letter-spacing: 0.116px;">Edit Card</div></div><div class="card" style="top:513px"><div class="lb"><svg class="i" style="left:0;top:0" width="50" height="50" viewBox="0 0 50 50"><defs><linearGradient id="gl" x1="0" y1="0" x2="0" y2="1"><stop offset="0" stop-color="#17265a"></stop><stop offset=".52" stop-color="#1f3367"></stop><stop offset=".56" stop-color="#294074"></stop><stop offset="1" stop-color="#314c84"></stop></linearGradient></defs><rect x="0" y="7.5" width="50" height="34" fill="url(#gl)"></rect><text x="2.900" y="19.300" font-family="Liberation Sans, sans-serif" font-size="9.600" textLength="43.400" lengthAdjust="spacingAndGlyphs"><tspan fill="#86b6ea" font-weight="700">GL</tspan><tspan fill="#f4f6fa">HOMES</tspan></text></svg></div><div class="t" style="left: 74px; top: 11.3px; font-size: 16.2px; line-height: 23px; color: rgb(17, 17, 17); font-weight: 700; letter-spacing: 0.018px;">GL Homes</div><svg class="i" style="left:75.19999999999999px;top:40.5px" width="8" height="7.300" viewBox="0 0 12 11"><path d="M6 10.400 C6 10.400 .7 7.200 .7 3.700 C.7 2 2 .8 3.500 .8 C4.600 .8 5.500 1.400 6 2.300 C6.500 1.400 7.400 .8 8.500 .8 C10 .8 11.300 2 11.300 3.700 C11.300 7.200 6 10.400 6 10.400Z" fill="none" stroke="#5a7396" stroke-width="1.400"></path></svg><div class="t" style="left:86.30000000000001px;top:36.69999999999999px;font-size:9.8px;line-height:14px;color:#444;-webkit-text-stroke:0.35px;">0</div><svg class="i" style="left:101px;top:39.69999999999999px" width="8" height="8" viewBox="0 0 8 8"><rect x=".5" y=".5" width="7" height="7" rx=".8" fill="none" stroke="#c6c6ca" stroke-width=".9"></rect><line x1="3" y1=".5" x2="3" y2="7.5" stroke="#d0d0d4" stroke-width=".7"></line><line x1="4.200" y1="3" x2="6.300" y2="3" stroke="#d0d0d4" stroke-width=".7"></line><line x1="4.200" y1="5" x2="6.300" y2="5" stroke="#d0d0d4" stroke-width=".7"></line></svg><div class="t" style="left:112.10000000000002px;top:36.69999999999999px;font-size:9.8px;line-height:14px;color:#444;-webkit-text-stroke:0.35px;">0</div><svg class="i" style="left:75.5px;top:60.5px" width="7" height="9" viewBox="0 0 7 9"><path d="M3.500 8.500 C3.500 8.500 .5 5.500 .5 3.400 A3 3 0 0 1 6.500 3.400 C6.500 5.500 3.500 8.500 3.500 8.500Z" fill="none" stroke="#b0b0b4" stroke-width=".8"></path><circle cx="3.5" cy="3.400" r="1" fill="none" stroke="#b0b0b4" stroke-width=".7"></circle></svg><div class="t" style="left: 86.5px; top: 59.4px; font-size: 10.2px; line-height: 14px; color: rgb(80, 80, 80); -webkit-text-stroke: 0.18px; letter-spacing: 0.007px;">12776 Springbrook Court</div><svg class="i" style="left:75.80000000000001px;top:77.5px" width="7" height="8" viewBox="0 0 7 8"><circle cx="3.5" cy="2" r="1.700" fill="#d2d2d6" stroke="#c4c4c8" stroke-width=".5"></circle><path d="M.4 7.600 C.4 5 2 4.500 3.500 4.500 S6.600 5 6.600 7.600Z" fill="#d2d2d6" stroke="#c4c4c8" stroke-width=".5"></path></svg><div class="t" style="left: 86.5px; top: 74.7px; font-size: 10.2px; line-height: 14px; color: rgb(80, 80, 80); -webkit-text-stroke: 0.18px; letter-spacing: 0.101px;">Heather Wightman</div><svg class="i" style="left:184.3px;top:77.30000000000001px" width="8" height="8" viewBox="0 0 8 8"><path d="M1.600 .6 L2.800 .6 L3.400 2.400 L2.600 3.200 C3.100 4.200 3.800 4.900 4.800 5.400 L5.600 4.600 L7.400 5.200 V6.400 C7.400 7 7 7.400 6.400 7.400 C3.200 7.200 .8 4.800 .6 1.600 C.6 1 1 .6 1.600 .6Z" fill="none" stroke="#b8b8bc" stroke-width=".8"></path></svg><div class="t" style="left: 194.8px; top: 74.7px; font-size: 10.2px; line-height: 14px; color: rgb(80, 80, 80); -webkit-text-stroke: 0.18px; letter-spacing: 0.136px;">(239) 775-2600</div><svg class="i" style="left:276.79999999999995px;top:77.30000000000001px" width="8.5" height="8.5" viewBox="0 0 9 9"><circle cx="4.5" cy="4.5" r="3.900" fill="none" stroke="#8a8a90" stroke-width=".9"></circle><path d="M1.200 3 C2.500 3.500 3 4.500 4 4.800 C4.800 5 4.500 6.500 3.800 8 M5 .8 C4.500 2 5.500 2.600 6.500 2.400 C7 3.500 6 4.500 7 5.500 L8 5.600" fill="none" stroke="#8a8a90" stroke-width=".8"></path></svg><div class="t" style="left: 288.8px; top: 74.7px; font-size: 10.2px; line-height: 14px; color: rgb(80, 80, 80); -webkit-text-stroke: 0.18px; letter-spacing: 0.075px;">www.glhomes.com</div><div class="t" style="left: 74px; top: 90.7px; font-size: 9.8px; line-height: 14px; color: rgb(180, 180, 186); transform-origin: 0px 50%; transform: scaleX(0.9887);">Category:</div><div class="chip" style="left:122px;top:92px;width:83px"></div><div class="t" style="left: 124.8px; top: 91.1px; font-size: 10.2px; line-height: 14px; color: rgb(34, 34, 34); -webkit-text-stroke: 0.35px; transform-origin: 0px 50%; transform: scaleX(0.9853);">Building Services</div><div class="t" style="left: 74px; top: 107px; font-size: 9.8px; line-height: 14px; color: rgb(180, 180, 186); transform-origin: 0px 50%; transform: scaleX(0.9735);">Area:</div><div class="chip" style="left:122.0px;top:108.30000000000001px;width:36.5px"></div><div class="t" style="left: 124.8px; top: 107.4px; font-size: 10.2px; line-height: 14px; color: rgb(34, 34, 34); -webkit-text-stroke: 0.35px; transform-origin: 0px 50%; transform: scaleX(0.9617);">Naples</div><div class="chip" style="left:164.0px;top:108.30000000000001px;width:34.5px"></div><div class="t" style="left: 166.8px; top: 107.4px; font-size: 10.2px; line-height: 14px; color: rgb(34, 34, 34); -webkit-text-stroke: 0.35px; transform-origin: 0px 50%; transform: scaleX(0.9677);">Estero</div><div class="chip" style="left:204.0px;top:108.30000000000001px;width:70.8px"></div><div class="t" style="left: 206.8px; top: 107.4px; font-size: 10.2px; line-height: 14px; color: rgb(34, 34, 34); -webkit-text-stroke: 0.35px; transform-origin: 0px 50%; transform: scaleX(0.978);">Bonita Springs</div><div class="chip" style="left:280.80000000000007px;top:108.30000000000001px;width:53.2px"></div><div class="t" style="left: 283.6px; top: 107.4px; font-size: 10.2px; line-height: 14px; color: rgb(34, 34, 34); -webkit-text-stroke: 0.35px; transform-origin: 0px 50%; transform: scaleX(0.9695);">Fort Myers</div><div class="t" style="left: 74px; top: 123.5px; font-size: 9.8px; line-height: 14px; color: rgb(180, 180, 186); transform-origin: 0px 50%; transform: scaleX(0.9906);">Note:</div><div class="note"></div><div class="t" style="left: 131px; top: 130.5px; font-size: 8.3px; line-height: 12px; color: rgb(188, 188, 194); transform-origin: 0px 50%; transform: scaleX(0.9928);">Enter Notes Here...</div><svg class="i" style="left:488.5px;top:141.5px" width="13" height="13" viewBox="0 0 13 13"><path d="M2.200 8.200 L8.800 1.600 L10.600 3.400 L4 10 L1.800 10.400Z" fill="#aaa" stroke="#888" stroke-width=".9" stroke-linejoin="round"></path><path d="M8 2.400 L9.800 4.200" stroke="#888" stroke-width=".9"></path><line x1=".5" y1="12.300" x2="12.5" y2="12.300" stroke="#888" stroke-width="1"></line></svg><div class="circ" style="left:531px;top:76.19999999999999px"></div><div class="circ" style="left:567.6px;top:76.19999999999999px"></div><div class="circ" style="left:604.2px;top:76.19999999999999px"></div><div class="circ" style="left:641px;top:76.19999999999999px"></div><svg class="i" style="left:541.7px;top:86.69999999999999px" width="12" height="12" viewBox="0 0 12 12"><path d="M4 4.600 H2.400 V10.800 H9.600 V4.600 H8" fill="none" stroke="#444" stroke-width="1"></path><path d="M6 7.600 V1.400 M4.200 3 L6 1.200 L7.800 3" fill="none" stroke="#444" stroke-width="1"></path></svg><svg class="i" style="left:577.8000000000001px;top:86.69999999999999px" width="12" height="12" viewBox="0 0 12 12"><path d="M10 6 V1.200 H1.200 V9.800 H6.600" fill="none" stroke="#555" stroke-width="1"></path><line x1="3.800" y1="1.200" x2="3.800" y2="9.800" stroke="#555" stroke-width=".8"></line><g stroke="#555" stroke-width=".8"><line x1="2" y1="3.400" x2="3" y2="3.400"></line><line x1="2" y1="5.5" x2="3" y2="5.5"></line><line x1="2" y1="7.600" x2="3" y2="7.600"></line><line x1="5" y1="3.400" x2="8.600" y2="3.400"></line><line x1="5" y1="5.5" x2="8.600" y2="5.5"></line><line x1="5" y1="7.600" x2="6.600" y2="7.600"></line></g><path d="M9.600 7.600 V11.600 M7.600 9.600 H11.600" stroke="#444" stroke-width="1"></path></svg><svg class="i" style="left:614.9000000000001px;top:86.69999999999999px" width="12" height="11" viewBox="0 0 12 11"><path d="M6 10.400 C6 10.400 .7 7.200 .7 3.700 C.7 2 2 .8 3.500 .8 C4.600 .8 5.500 1.400 6 2.300 C6.500 1.400 7.400 .8 8.500 .8 C10 .8 11.300 2 11.300 3.700 C11.300 7.200 6 10.400 6 10.400Z" fill="none" stroke="#444" stroke-width="1.100"></path></svg><svg class="i" style="left:650.7px;top:86.19999999999999px" width="13" height="13" viewBox="0 0 13 13"><path d="M.6 1.400 H2.200 L4.400 7.400 H9.600 L11.200 4" fill="none" stroke="#444" stroke-width="1.100" stroke-linejoin="round"></path><path d="M4.400 7.400 L3.700 9.200 H10.400" fill="none" stroke="#444" stroke-width="1.100"></path><circle cx="4.400" cy="11.200" r="1" fill="#444"></circle><circle cx="9.600" cy="11.200" r="1" fill="#444"></circle><path d="M7 .6 V4.600 M5 2.600 H9" stroke="#444" stroke-width="1"></path></svg><div class="t" style="left: 632px; top: 182.1px; font-size: 10.8px; line-height: 15px; color: rgb(168, 168, 174); text-decoration: underline; letter-spacing: 0.116px;">Edit Card</div></div><div class="card" style="top:733.8px"><div class="lb"><svg class="i" style="left:0;top:0" width="50" height="50" viewBox="0 0 50 50"><defs><linearGradient id="gd" x1="0" y1="0" x2="0" y2="1"><stop offset="0" stop-color="#d9b870"></stop><stop offset=".45" stop-color="#c9a55e"></stop><stop offset=".55" stop-color="#d8d8e6"></stop><stop offset="1" stop-color="#c4c4d8"></stop></linearGradient></defs><rect x="0" y="7.600" width="50" height="33.400" fill="#15156c"></rect><path d="M7.800 10.100 H18.600 V20.200 H15.200 V12.200 H11.300 V32.700 H7.800Z" fill="url(#gd)"></path><path d="M4.600 19 L9 18 M18.600 20.300 L25.200 18.400 L45.500 24.300" fill="none" stroke="#c9c9de" stroke-width=".9"></path><path d="M19 22.300 L25.200 20.600 L41 25.200" fill="none" stroke="#8a8ac0" stroke-width=".5"></path><path d="M5.300 33.400 C18 36.500 36 36.400 47.800 32 C36 35 20 34.800 5.300 33.400Z" fill="#d4d4e6" stroke="#d4d4e6" stroke-width=".5"></path><text x="14.600" y="27.700" font-family="Liberation Serif, serif" font-size="4.800" font-weight="700" fill="#b4b4e4" textLength="23.5" lengthAdjust="spacingAndGlyphs">LIFESTYLE</text><rect x="17" y="29.600" width="18" height=".4" fill="#7f7fb8"></rect></svg></div><div class="t" style="left: 74px; top: 11.3px; font-size: 16.2px; line-height: 23px; color: rgb(17, 17, 17); font-weight: 700; letter-spacing: 0.158px;">Lifestyle Design Homes</div><svg class="i" style="left:75.19999999999999px;top:40.5px" width="8" height="7.300" viewBox="0 0 12 11"><path d="M6 10.400 C6 10.400 .7 7.200 .7 3.700 C.7 2 2 .8 3.500 .8 C4.600 .8 5.500 1.400 6 2.300 C6.500 1.400 7.400 .8 8.500 .8 C10 .8 11.300 2 11.300 3.700 C11.300 7.200 6 10.400 6 10.400Z" fill="none" stroke="#5a7396" stroke-width="1.400"></path></svg><div class="t" style="left:86.30000000000001px;top:36.69999999999999px;font-size:9.8px;line-height:14px;color:#444;-webkit-text-stroke:0.35px;">0</div><svg class="i" style="left:101px;top:39.69999999999999px" width="8" height="8" viewBox="0 0 8 8"><rect x=".5" y=".5" width="7" height="7" rx=".8" fill="none" stroke="#c6c6ca" stroke-width=".9"></rect><line x1="3" y1=".5" x2="3" y2="7.5" stroke="#d0d0d4" stroke-width=".7"></line><line x1="4.200" y1="3" x2="6.300" y2="3" stroke="#d0d0d4" stroke-width=".7"></line><line x1="4.200" y1="5" x2="6.300" y2="5" stroke="#d0d0d4" stroke-width=".7"></line></svg><div class="t" style="left:112.10000000000002px;top:36.69999999999999px;font-size:9.8px;line-height:14px;color:#444;-webkit-text-stroke:0.35px;">0</div><svg class="i" style="left:75.5px;top:60.5px" width="7" height="9" viewBox="0 0 7 9"><path d="M3.500 8.500 C3.500 8.500 .5 5.500 .5 3.400 A3 3 0 0 1 6.500 3.400 C6.500 5.500 3.500 8.500 3.500 8.500Z" fill="none" stroke="#b0b0b4" stroke-width=".8"></path><circle cx="3.5" cy="3.400" r="1" fill="none" stroke="#b0b0b4" stroke-width=".7"></circle></svg><div class="t" style="left: 86.5px; top: 59.4px; font-size: 10.2px; line-height: 14px; color: rgb(80, 80, 80); -webkit-text-stroke: 0.18px; transform-origin: 0px 50%; transform: scaleX(0.9959);">24831 Old 41 Road</div><svg class="i" style="left:75.80000000000001px;top:77.5px" width="7" height="8" viewBox="0 0 7 8"><circle cx="3.5" cy="2" r="1.700" fill="#d2d2d6" stroke="#c4c4c8" stroke-width=".5"></circle><path d="M.4 7.600 C.4 5 2 4.500 3.500 4.500 S6.600 5 6.600 7.600Z" fill="#d2d2d6" stroke="#c4c4c8" stroke-width=".5"></path></svg><div class="t" style="left: 86.5px; top: 74.7px; font-size: 10.2px; line-height: 14px; color: rgb(80, 80, 80); -webkit-text-stroke: 0.18px; letter-spacing: 0.079px;">Lifestyle Team</div><svg class="i" style="left:163.8px;top:77.30000000000001px" width="8" height="8" viewBox="0 0 8 8"><path d="M1.600 .6 L2.800 .6 L3.400 2.400 L2.600 3.200 C3.100 4.200 3.800 4.900 4.800 5.400 L5.600 4.600 L7.400 5.200 V6.400 C7.400 7 7 7.400 6.400 7.400 C3.200 7.200 .8 4.800 .6 1.600 C.6 1 1 .6 1.600 .6Z" fill="none" stroke="#b8b8bc" stroke-width=".8"></path></svg><div class="t" style="left: 174.3px; top: 74.7px; font-size: 10.2px; line-height: 14px; color: rgb(80, 80, 80); -webkit-text-stroke: 0.18px; letter-spacing: 0.136px;">(239) 949-1300</div><svg class="i" style="left:256.29999999999995px;top:77.30000000000001px" width="8.5" height="8.5" viewBox="0 0 9 9"><circle cx="4.5" cy="4.5" r="3.900" fill="none" stroke="#8a8a90" stroke-width=".9"></circle><path d="M1.200 3 C2.500 3.500 3 4.500 4 4.800 C4.800 5 4.500 6.500 3.800 8 M5 .8 C4.500 2 5.500 2.600 6.500 2.400 C7 3.500 6 4.500 7 5.500 L8 5.600" fill="none" stroke="#8a8a90" stroke-width=".8"></path></svg><div class="t" style="left: 268.3px; top: 74.7px; font-size: 10.2px; line-height: 14px; color: rgb(80, 80, 80); -webkit-text-stroke: 0.18px; letter-spacing: 0.058px;">lifestyledesignhomes.com</div><div class="t" style="left: 74px; top: 90.7px; font-size: 9.8px; line-height: 14px; color: rgb(180, 180, 186); transform-origin: 0px 50%; transform: scaleX(0.9887);">Category:</div><div class="chip" style="left:122px;top:92px;width:83px"></div><div class="t" style="left: 124.8px; top: 91.1px; font-size: 10.2px; line-height: 14px; color: rgb(34, 34, 34); -webkit-text-stroke: 0.35px; transform-origin: 0px 50%; transform: scaleX(0.9853);">Building Services</div><div class="t" style="left: 74px; top: 107px; font-size: 9.8px; line-height: 14px; color: rgb(180, 180, 186); transform-origin: 0px 50%; transform: scaleX(0.9735);">Area:</div><div class="chip" style="left:122.0px;top:108.30000000000001px;width:36.5px"></div><div class="t" style="left: 124.8px; top: 107.4px; font-size: 10.2px; line-height: 14px; color: rgb(34, 34, 34); -webkit-text-stroke: 0.35px; transform-origin: 0px 50%; transform: scaleX(0.9617);">Naples</div><div class="chip" style="left:164.0px;top:108.30000000000001px;width:34.5px"></div><div class="t" style="left: 166.8px; top: 107.4px; font-size: 10.2px; line-height: 14px; color: rgb(34, 34, 34); -webkit-text-stroke: 0.35px; transform-origin: 0px 50%; transform: scaleX(0.9677);">Estero</div><div class="chip" style="left:204.0px;top:108.30000000000001px;width:70.8px"></div><div class="t" style="left: 206.8px; top: 107.4px; font-size: 10.2px; line-height: 14px; color: rgb(34, 34, 34); -webkit-text-stroke: 0.35px; transform-origin: 0px 50%; transform: scaleX(0.978);">Bonita Springs</div><div class="chip" style="left:280.80000000000007px;top:108.30000000000001px;width:53.2px"></div><div class="t" style="left: 283.6px; top: 107.4px; font-size: 10.2px; line-height: 14px; color: rgb(34, 34, 34); -webkit-text-stroke: 0.35px; transform-origin: 0px 50%; transform: scaleX(0.9695);">Fort Myers</div><div class="t" style="left: 74px; top: 123.5px; font-size: 9.8px; line-height: 14px; color: rgb(180, 180, 186); transform-origin: 0px 50%; transform: scaleX(0.9906);">Note:</div><div class="note"></div><div class="t" style="left: 131px; top: 130.5px; font-size: 8.3px; line-height: 12px; color: rgb(188, 188, 194); transform-origin: 0px 50%; transform: scaleX(0.9928);">Enter Notes Here...</div><svg class="i" style="left:488.5px;top:141.5px" width="13" height="13" viewBox="0 0 13 13"><path d="M2.200 8.200 L8.800 1.600 L10.600 3.400 L4 10 L1.800 10.400Z" fill="#aaa" stroke="#888" stroke-width=".9" stroke-linejoin="round"></path><path d="M8 2.400 L9.800 4.200" stroke="#888" stroke-width=".9"></path><line x1=".5" y1="12.300" x2="12.5" y2="12.300" stroke="#888" stroke-width="1"></line></svg><div class="circ" style="left:531px;top:76.19999999999999px"></div><div class="circ" style="left:567.6px;top:76.19999999999999px"></div><div class="circ" style="left:604.2px;top:76.19999999999999px"></div><div class="circ" style="left:641px;top:76.19999999999999px"></div><svg class="i" style="left:541.7px;top:86.69999999999999px" width="12" height="12" viewBox="0 0 12 12"><path d="M4 4.600 H2.400 V10.800 H9.600 V4.600 H8" fill="none" stroke="#444" stroke-width="1"></path><path d="M6 7.600 V1.400 M4.200 3 L6 1.200 L7.800 3" fill="none" stroke="#444" stroke-width="1"></path></svg><svg class="i" style="left:577.8000000000001px;top:86.69999999999999px" width="12" height="12" viewBox="0 0 12 12"><path d="M10 6 V1.200 H1.200 V9.800 H6.600" fill="none" stroke="#555" stroke-width="1"></path><line x1="3.800" y1="1.200" x2="3.800" y2="9.800" stroke="#555" stroke-width=".8"></line><g stroke="#555" stroke-width=".8"><line x1="2" y1="3.400" x2="3" y2="3.400"></line><line x1="2" y1="5.5" x2="3" y2="5.5"></line><line x1="2" y1="7.600" x2="3" y2="7.600"></line><line x1="5" y1="3.400" x2="8.600" y2="3.400"></line><line x1="5" y1="5.5" x2="8.600" y2="5.5"></line><line x1="5" y1="7.600" x2="6.600" y2="7.600"></line></g><path d="M9.600 7.600 V11.600 M7.600 9.600 H11.600" stroke="#444" stroke-width="1"></path></svg><svg class="i" style="left:614.9000000000001px;top:86.69999999999999px" width="12" height="11" viewBox="0 0 12 11"><path d="M6 10.400 C6 10.400 .7 7.200 .7 3.700 C.7 2 2 .8 3.500 .8 C4.600 .8 5.500 1.400 6 2.300 C6.500 1.400 7.400 .8 8.500 .8 C10 .8 11.300 2 11.300 3.700 C11.300 7.200 6 10.400 6 10.400Z" fill="none" stroke="#444" stroke-width="1.100"></path></svg><svg class="i" style="left:650.7px;top:86.19999999999999px" width="13" height="13" viewBox="0 0 13 13"><path d="M.6 1.400 H2.200 L4.400 7.400 H9.600 L11.200 4" fill="none" stroke="#444" stroke-width="1.100" stroke-linejoin="round"></path><path d="M4.400 7.400 L3.700 9.200 H10.400" fill="none" stroke="#444" stroke-width="1.100"></path><circle cx="4.400" cy="11.200" r="1" fill="#444"></circle><circle cx="9.600" cy="11.200" r="1" fill="#444"></circle><path d="M7 .6 V4.600 M5 2.600 H9" stroke="#444" stroke-width="1"></path></svg><div class="t" style="left: 632px; top: 182.1px; font-size: 10.8px; line-height: 15px; color: rgb(168, 168, 174); text-decoration: underline; letter-spacing: 0.116px;">Edit Card</div></div></div></body></html>
